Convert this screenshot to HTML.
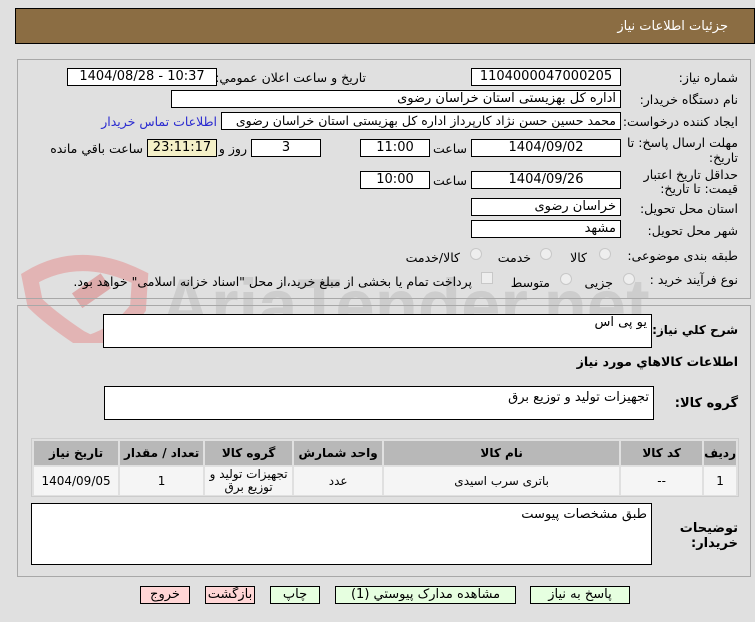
<!DOCTYPE html>
<html><head><meta charset="utf-8">
<style>
*{margin:0;padding:0;box-sizing:border-box}
body{width:755px;height:622px;background:#e0e0e0;font-family:"DejaVu Sans","Liberation Sans",sans-serif;font-size:12px;color:#000;position:relative;overflow:hidden}
.a{position:absolute}
.box{position:absolute;background:#fff;border:1px solid #000;height:18px;line-height:16px;font-size:13px;direction:rtl;padding:0 4px;white-space:nowrap;overflow:hidden}
.c{text-align:center;direction:ltr}
.l{position:absolute;direction:rtl;white-space:nowrap;font-size:12.5px}
.b{font-weight:bold}
.btn{position:absolute;top:586px;height:18px;border:1px solid #000;background:#e6ffe0;text-align:center;line-height:16px;font-size:13px;direction:rtl}
.pk{background:#ffd6d6}
table{border-collapse:separate;border-spacing:2px;direction:rtl}
td{font-size:12px;text-align:center;direction:rtl}
.radio{position:absolute;width:12px;height:12px;border-radius:50%;border:1px solid #c8c8c8;background:#eee}
</style></head><body>
<div class="a" style="left:15px;top:8px;width:740px;height:36px;background:#8b6d43;border:1px solid #000"></div>
<div class="l" style="right:27px;top:19px;color:#fff;font-size:13px">جزئیات اطلاعات نیاز</div>

<!-- watermark -->
<svg class="a" style="left:20px;top:248px" width="130" height="95" viewBox="0 0 130 95"><path d="M10 30 Q60 0 120 30 L118 60 Q100 85 70 95 L60 90 Q30 70 15 55 Z" fill="none" stroke="#e2b4b4" stroke-width="16"/><rect x="55" y="35" width="35" height="18" fill="#dcaaaa" transform="rotate(-35 70 45)"/></svg>
<div class="a" style="left:160px;top:262px;font-size:76px;line-height:90px;font-weight:bold;color:#cdcdcd;font-family:'Liberation Sans',sans-serif;transform:scaleX(0.93);transform-origin:left top">AriaTender.net</div>

<div class="a" style="left:17px;top:59px;width:734px;height:240px;border:1px solid #a8a8a8"></div>
<div class="a" style="left:17px;top:305px;width:734px;height:272px;border:1px solid #a8a8a8"></div>

<div class="l" style="right:17px;top:70px">شماره نیاز:</div>
<div class="box c" style="left:471px;top:68px;width:150px">1104000047000205</div>
<div class="l" style="right:389px;top:70px">تاریخ و ساعت اعلان عمومي:</div>
<div class="box c" style="left:67px;top:68px;width:150px">1404/08/28 - 10:37</div>

<div class="l" style="right:17px;top:92px">نام دستگاه خریدار:</div>
<div class="box" style="left:171px;top:90px;width:450px">اداره کل بهزیستی استان خراسان رضوی</div>

<div class="l" style="right:17px;top:114px">ایجاد کننده درخواست:</div>
<div class="box" style="left:221px;top:112px;width:400px;font-size:12.5px">محمد حسین حسن نژاد کارپرداز اداره کل بهزیستی استان خراسان رضوی</div>
<div class="l" style="right:538px;top:114px;color:#2a2ad0">اطلاعات تماس خریدار</div>

<div class="l" style="right:17px;top:135px">مهلت ارسال پاسخ: تا</div>
<div class="l" style="right:17px;top:150px">تاریخ:</div>
<div class="box c" style="left:471px;top:139px;width:150px">1404/09/02</div>
<div class="l" style="right:288px;top:141px">ساعت</div>
<div class="box c" style="left:360px;top:139px;width:70px">11:00</div>
<div class="box c" style="left:251px;top:139px;width:70px">3</div>
<div class="l" style="right:508px;top:141px">روز و</div>
<div class="box c" style="left:147px;top:139px;width:70px;background:#f4f0c8">23:11:17</div>
<div class="l" style="right:612px;top:141px">ساعت باقي مانده</div>

<div class="l" style="right:17px;top:167px">حداقل تاریخ اعتبار</div>
<div class="l" style="right:17px;top:181px">قیمت: تا تاریخ:</div>
<div class="box c" style="left:471px;top:171px;width:150px">1404/09/26</div>
<div class="l" style="right:288px;top:173px">ساعت</div>
<div class="box c" style="left:360px;top:171px;width:70px">10:00</div>

<div class="l" style="right:17px;top:201px">استان محل تحویل:</div>
<div class="box" style="left:471px;top:198px;width:150px">خراسان رضوی</div>
<div class="l" style="right:17px;top:223px">شهر محل تحویل:</div>
<div class="box" style="left:471px;top:220px;width:150px">مشهد</div>

<div class="l" style="right:17px;top:248px">طبقه بندی موضوعی:</div>
<div class="radio" style="left:599px;top:248px"></div><div class="l" style="right:168px;top:250px">کالا</div>
<div class="radio" style="left:540px;top:248px"></div><div class="l" style="right:224px;top:250px">خدمت</div>
<div class="radio" style="left:470px;top:248px"></div><div class="l" style="right:295px;top:250px">کالا/خدمت</div>

<div class="l" style="right:17px;top:272px">نوع فرآیند خرید :</div>
<div class="radio" style="left:623px;top:273px"></div><div class="l" style="right:142px;top:275px">جزیی</div>
<div class="radio" style="left:560px;top:273px"></div><div class="l" style="right:205px;top:275px">متوسط</div>
<div class="a" style="left:481px;top:272px;width:12px;height:12px;border:1px solid #c8c8c8;background:#eee"></div>
<div class="l" style="right:283px;top:274px">پرداخت تمام یا بخشی از مبلغ خرید،از محل "اسناد خزانه اسلامی" خواهد بود.</div>

<div class="l b" style="right:17px;top:323px;font-size:12px">شرح کلي نیاز:</div>
<div class="box" style="left:103px;top:314px;width:549px;height:34px">یو پی اس</div>
<div class="l b" style="right:17px;top:354px;font-size:12.5px">اطلاعات کالاهاي مورد نیاز</div>
<div class="l b" style="right:17px;top:396px;font-size:13px">گروه کالا:</div>
<div class="box" style="left:104px;top:386px;width:550px;height:34px;padding-top:3px">تجهیزات تولید و توزیع برق</div>

<div class="a" style="left:31px;top:438px;width:708px;height:59px;border:1px solid #ccc">
<table style="width:706px;height:57px">
<tr style="background:#b8b8b8;height:24px;font-weight:bold">
<td style="width:27px">ردیف</td><td style="width:81px">کد کالا</td><td style="width:235px">نام کالا</td><td style="width:88px">واحد شمارش</td><td style="width:87px">گروه کالا</td><td style="width:83px">تعداد / مقدار</td><td>تاریخ نیاز</td></tr>
<tr style="background:#f5f5f5;height:28px">
<td>1</td><td>--</td><td>باتری سرب اسیدی</td><td>عدد</td><td style="line-height:13px">تجهیزات تولید و توزیع برق</td><td>1</td><td>1404/09/05</td></tr>
</table></div>

<div class="l b" style="right:17px;top:521px;font-size:13px">توضیحات</div>
<div class="l b" style="right:17px;top:536px;font-size:13px">خریدار:</div>
<div class="box" style="left:31px;top:503px;width:621px;height:62px;padding-top:3px">طبق مشخصات پیوست</div>

<div class="btn" style="left:530px;width:100px">پاسخ به نیاز</div>
<div class="btn" style="left:335px;width:181px">مشاهده مدارک پیوستي (1)</div>
<div class="btn" style="left:270px;width:50px">چاپ</div>
<div class="btn pk" style="left:205px;width:50px">بازگشت</div>
<div class="btn pk" style="left:140px;width:50px">خروج</div>
</body></html>
